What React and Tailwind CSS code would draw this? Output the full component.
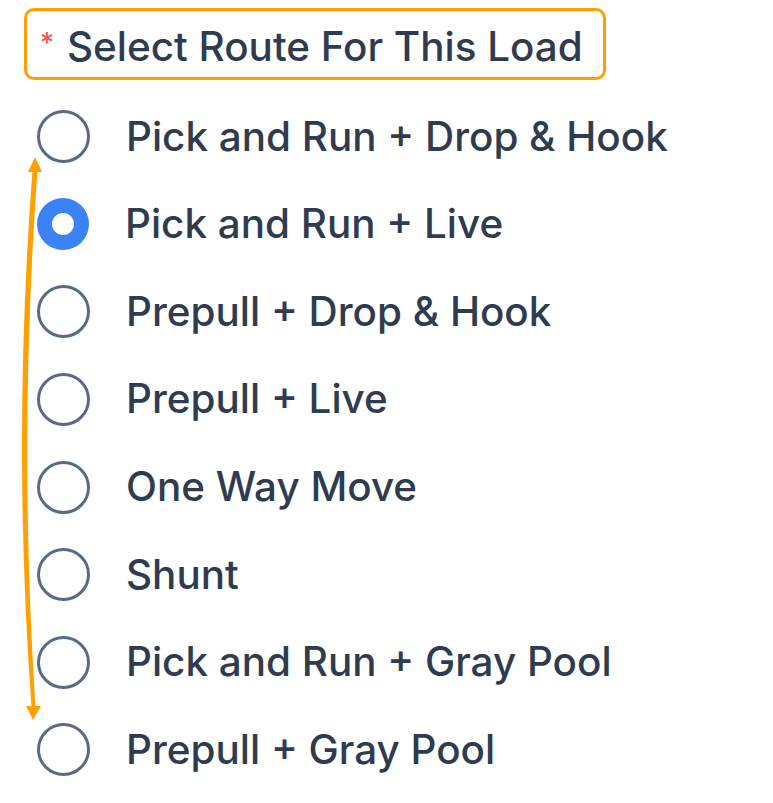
import React from "react";

const options = [
  "Pick and Run + Drop & Hook",
  "Pick and Run + Live",
  "Prepull + Drop & Hook",
  "Prepull + Live",
  "One Way Move",
  "Shunt",
  "Pick and Run + Gray Pool",
  "Prepull + Gray Pool",
];

export default function App() {
  return (
    <div
      className="relative w-[773px] h-[803px] bg-white overflow-hidden"
      style={{ fontFamily: "Inter, 'Noto Sans', sans-serif" }}
    >
      <div className="pl-[24px] pt-[8px]">
        <div className="w-[582px] h-[72px] border-[3px] border-[#ffa000] rounded-[10px] flex items-center pl-[13px]">
          <span className="text-[28px] text-[#f05252] leading-none mr-[13px] mt-[-2px]">*</span>
          <span className="text-[40.4px] leading-none text-[#2f3b4f] font-medium mt-[6px]">Select Route For This Load</span>
        </div>
      </div>
      <div className="pl-[37px] mt-[13px] flex flex-col">
        {options.map((o, i) => (
          <div key={o} className="h-[87.6px] flex items-center">
            {i === 1 ? (
              <div className="w-[52px] h-[52px] rounded-full bg-[#3b82f6] flex items-center justify-center shrink-0">
                <div className="w-[22px] h-[22px] rounded-full bg-white" />
              </div>
            ) : (
              <div className="w-[53px] h-[53px] rounded-full border-[3px] border-[#5a6a84] shrink-0" />
            )}
            <span className="ml-[36px] text-[40.4px] leading-none text-[#2f3b4f] font-medium">{o}</span>
          </div>
        ))}
      </div>
      <svg className="absolute left-0 top-0" width="773" height="803" viewBox="0 0 773 803">
        <path
          d="M32.5 170 Q 12 440 31.5 707 L 35.5 707 Q 18 440 37.5 170 Z"
          fill="#ffa000"
        />
        <polygon points="35,157 28,172 42,172" fill="#ffa000" />
        <polygon points="33,720 26,706 41,706" fill="#ffa000" />
      </svg>
    </div>
  );
}
